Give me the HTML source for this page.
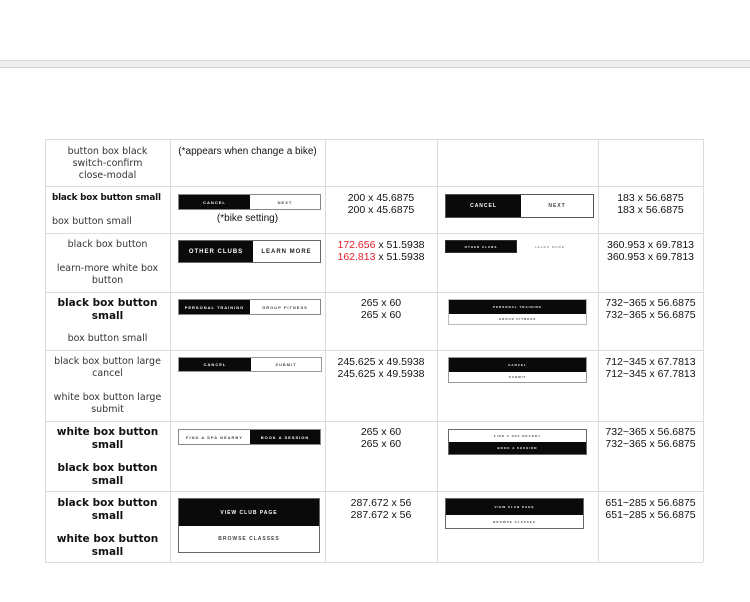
<!DOCTYPE html>
<html><head><meta charset="utf-8"><style>
*{margin:0;padding:0;box-sizing:border-box}
body{width:750px;height:602px;background:#fff;position:relative;overflow:hidden;font-family:"Liberation Sans",sans-serif;color:#222}
.a{position:absolute}
.hl{position:absolute;height:1px;background:#dcdcdc;left:45px;width:658px}
.vl{position:absolute;width:1px;background:#dcdcdc;top:139px;height:423px}
.t1{position:absolute;font-family:"DejaVu Sans",sans-serif;font-size:9.5px;line-height:12px;text-align:center;width:125px;left:45px;color:#333}
.t1 b{font-weight:bold;color:#111;font-size:10.5px}
.t3{position:absolute;font-size:10.5px;line-height:12px;text-align:center;color:#111}
.btn{position:absolute;display:flex;border:1px solid #888}
.btn div{display:flex;align-items:center;justify-content:center;font-weight:bold;letter-spacing:1px;font-size:4px}
.k{background:#0a0a0a;color:#fff}
.w{background:#fff;color:#444}
.col{flex-direction:column}
</style></head><body>
<div class="a" style="left:0;top:60px;width:750px;height:8px;background:#efefef;border-top:1px solid #d8d8d8;border-bottom:1px solid #d0d0d0"></div>

<div class="hl" style="top:139px"></div>
<div class="hl" style="top:186px"></div>
<div class="hl" style="top:233px"></div>
<div class="hl" style="top:292px"></div>
<div class="hl" style="top:350px"></div>
<div class="hl" style="top:421px"></div>
<div class="hl" style="top:491px"></div>
<div class="hl" style="top:562px"></div>
<div class="vl" style="left:45px"></div>
<div class="vl" style="left:170px"></div>
<div class="vl" style="left:325px"></div>
<div class="vl" style="left:437px"></div>
<div class="vl" style="left:598px"></div>
<div class="vl" style="left:703px"></div>

<div class="t1" style="top:146px">button box black<br>switch-confirm<br>close-modal</div>
<div class="t1" style="top:192px;text-align:left;left:52px;width:118px;white-space:nowrap"><b style="font-size:8.8px;letter-spacing:-0.2px">black box button small</b></div>
<div class="t1" style="top:216px;text-align:left;left:52px;width:118px">box button small</div>
<div class="t1" style="top:239px">black box button</div>
<div class="t1" style="top:263px">learn-more white box<br>button</div>
<div class="t1" style="top:297px"><b>black box button<br>small</b></div>
<div class="t1" style="top:333px">box button small</div>
<div class="t1" style="top:356px">black box button large<br>cancel</div>
<div class="t1" style="top:392px">white box button large<br>submit</div>
<div class="t1" style="top:426px"><b>white box button<br>small</b></div>
<div class="t1" style="top:462px"><b>black box button<br>small</b></div>
<div class="t1" style="top:497px"><b>black box button<br>small</b></div>
<div class="t1" style="top:533px"><b>white box button<br>small</b></div>

<div class="t3" style="left:170px;width:155px;top:146px;font-size:10px">(*appears when change a bike)</div>
<div class="t3" style="left:170px;width:155px;top:213px;font-size:10px">(*bike setting)</div>

<div class="t3" style="left:325px;width:112px;top:192px">200 x 45.6875<br>200 x 45.6875</div>
<div class="t3" style="left:325px;width:112px;top:239px"><span style="color:#e8202a">172.656</span> x 51.5938<br><span style="color:#e8202a">162.813</span> x 51.5938</div>
<div class="t3" style="left:325px;width:112px;top:297px">265 x 60<br>265 x 60</div>
<div class="t3" style="left:325px;width:112px;top:356px">245.625 x 49.5938<br>245.625 x 49.5938</div>
<div class="t3" style="left:325px;width:112px;top:426px">265 x 60<br>265 x 60</div>
<div class="t3" style="left:325px;width:112px;top:497px">287.672 x 56<br>287.672 x 56</div>

<div class="t3" style="left:598px;width:105px;top:192px">183 x 56.6875<br>183 x 56.6875</div>
<div class="t3" style="left:598px;width:105px;top:239px">360.953 x 69.7813<br>360.953 x 69.7813</div>
<div class="t3" style="left:598px;width:105px;top:297px">732~365 x 56.6875<br>732~365 x 56.6875</div>
<div class="t3" style="left:598px;width:105px;top:356px">712~345 x 67.7813<br>712~345 x 67.7813</div>
<div class="t3" style="left:598px;width:105px;top:426px">732~365 x 56.6875<br>732~365 x 56.6875</div>
<div class="t3" style="left:598px;width:105px;top:497px">651~285 x 56.6875<br>651~285 x 56.6875</div>

<div class="btn" style="left:178px;top:194px;width:143px;height:16px"><div class="k" style="width:71px">CANCEL</div><div class="w" style="flex:1">NEXT</div></div>
<div class="btn" style="left:178px;top:240px;width:143px;height:23px;border-color:#666"><div class="k" style="width:74px;font-size:6px">OTHER CLUBS</div><div class="w" style="flex:1;font-size:6px;color:#222">LEARN MORE</div></div>
<div class="btn" style="left:178px;top:299px;width:143px;height:16px"><div class="k" style="width:71px">PERSONAL TRAINING</div><div class="w" style="flex:1">GROUP FITNESS</div></div>
<div class="btn" style="left:178px;top:357px;width:144px;height:15px;border-color:#999"><div class="k" style="width:72px">CANCEL</div><div class="w" style="flex:1">SUBMIT</div></div>
<div class="btn" style="left:178px;top:429px;width:143px;height:16px"><div class="w" style="width:71px">FIND A SPA NEARBY</div><div class="k" style="flex:1">BOOK A SESSION</div></div>
<div class="btn col" style="left:178px;top:498px;width:142px;height:55px;border-color:#666"><div class="k" style="height:27px;font-size:5px">VIEW CLUB PAGE</div><div class="w" style="flex:1;font-size:5px">BROWSE CLASSES</div></div>

<div class="btn" style="left:445px;top:194px;width:149px;height:24px;border-color:#555"><div class="k" style="width:75px;font-size:5px">CANCEL</div><div class="w" style="flex:1;font-size:5px">NEXT</div></div>
<div class="btn" style="left:445px;top:240px;width:72px;height:13px;border-color:#333"><div class="k" style="flex:1;font-size:3px">OTHER CLUBS</div></div>
<div class="a" style="left:535px;top:245px;font-size:3px;letter-spacing:1px;color:#666">LEARN MORE</div>
<div class="btn col" style="left:448px;top:299px;width:139px;height:26px;border-color:#bbb"><div class="k" style="height:14px;font-size:3px">PERSONAL TRAINING</div><div class="w" style="flex:1;font-size:3px">GROUP FITNESS</div></div>
<div class="btn col" style="left:448px;top:357px;width:139px;height:26px;border-color:#999"><div class="k" style="height:14px;font-size:3px">CANCEL</div><div class="w" style="flex:1;font-size:3px">SUBMIT</div></div>
<div class="btn col" style="left:448px;top:429px;width:139px;height:26px;border-color:#666"><div class="w" style="height:12px;font-size:3px">FIND A SPA NEARBY</div><div class="k" style="flex:1;font-size:3px">BOOK A SESSION</div></div>
<div class="btn col" style="left:445px;top:498px;width:139px;height:31px;border-color:#666"><div class="k" style="height:16px;font-size:3px">VIEW CLUB PAGE</div><div class="w" style="flex:1;font-size:3px">BROWSE CLASSES</div></div>
</body></html>
